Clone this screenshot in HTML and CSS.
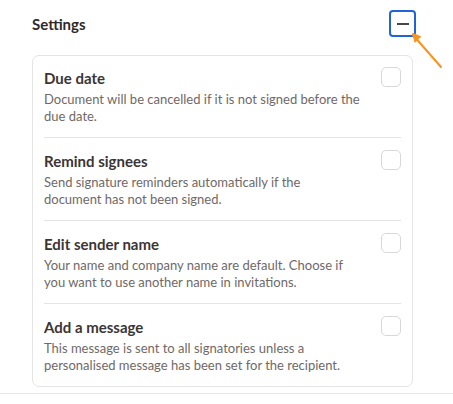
FILE: index.html
```html
<!DOCTYPE html>
<html lang="en">
<head>
<meta charset="utf-8">
<link rel="stylesheet" href="styles.css">
</head>
<body>
<div class="page">
  <div class="header">
    <h2 class="title">Settings</h2>
    <button class="toggle" aria-label="Collapse"><span class="minus"></span></button>
  </div>
  <div class="card">
    <div class="row">
      <div class="text">
        <div class="row-title">Due date</div>
        <div class="row-desc">Document will be cancelled if it is not signed before the due date.</div>
      </div>
      <span class="check"></span>
    </div>
    <div class="row">
      <div class="text">
        <div class="row-title">Remind signees</div>
        <div class="row-desc">Send signature reminders automatically if the document has not been signed.</div>
      </div>
      <span class="check"></span>
    </div>
    <div class="row">
      <div class="text">
        <div class="row-title">Edit sender name</div>
        <div class="row-desc">Your name and company name are default. Choose if you want to use another name in invitations.</div>
      </div>
      <span class="check"></span>
    </div>
    <div class="row">
      <div class="text">
        <div class="row-title">Add a message</div>
        <div class="row-desc">This message is sent to all signatories unless a personalised message has been set for the recipient.</div>
      </div>
      <span class="check"></span>
    </div>
  </div>
  <div class="rule"></div>
  <svg class="arrow" width="60" height="60" viewBox="0 0 60 60">
    <line x1="9" y1="10" x2="37" y2="42" stroke="#f7931e" stroke-width="2" stroke-linecap="round"/>
    <polygon points="8.7,8.3 16.7,11.7 11,17.3" fill="#f7931e" stroke="#f7931e" stroke-width="1" stroke-linejoin="round"/>
  </svg>
</div>
</body>
</html>
```
FILE: styles.css
```css
html, body {
  margin: 0;
  padding: 0;
  background: #ffffff;
}
.page {
  position: relative;
  width: 453px;
  height: 404px;
  font-family: "Lato", "Noto Sans", sans-serif;
  color: #3a3433;
}
.header {
  display: flex;
  align-items: center;
  justify-content: space-between;
  padding: 10px 37px 0 32px;
  height: 27px;
}
.title {
  margin: 0;
  font-size: 15px;
  font-weight: 700;
  color: #2f2a29;
}
.toggle {
  width: 27px;
  height: 27px;
  box-sizing: border-box;
  border: 2px solid #2064d8;
  border-radius: 4px;
  background: #fff;
  padding: 0;
  display: flex;
  align-items: center;
  justify-content: center;
}
.minus {
  display: block;
  width: 12px;
  height: 2px;
  background: #4a4544;
}
.card {
  margin: 18px 40px 0 32px;
  border: 1px solid #e5e4e4;
  border-radius: 7px;
  padding: 0 11px;
}
.row {
  display: flex;
  justify-content: space-between;
  align-items: flex-start;
  padding: 12px 0 12px;
  border-bottom: 1px solid #e6e5e5;
}
.row + .row {
  padding-top: 13px;
}
.row:last-child {
  border-bottom: none;
  padding-bottom: 12px;
}
.text {
  width: 316px;
}
.row-title {
  font-size: 15px;
  line-height: 20px;
  font-weight: 700;
  color: #3b3534;
}
.row-desc {
  margin-top: 3px;
  font-size: 13px;
  line-height: 17px;
  color: #6f6967;
}
.check {
  width: 20px;
  height: 20px;
  box-sizing: border-box;
  border: 1px solid #d9d8d8;
  border-radius: 5px;
  margin-top: -1px;
  flex: none;
}
.rule {
  margin-top: 6px;
  height: 1px;
  background: #e8e8e8;
}
.arrow {
  position: absolute;
  left: 404px;
  top: 25px;
}
```
